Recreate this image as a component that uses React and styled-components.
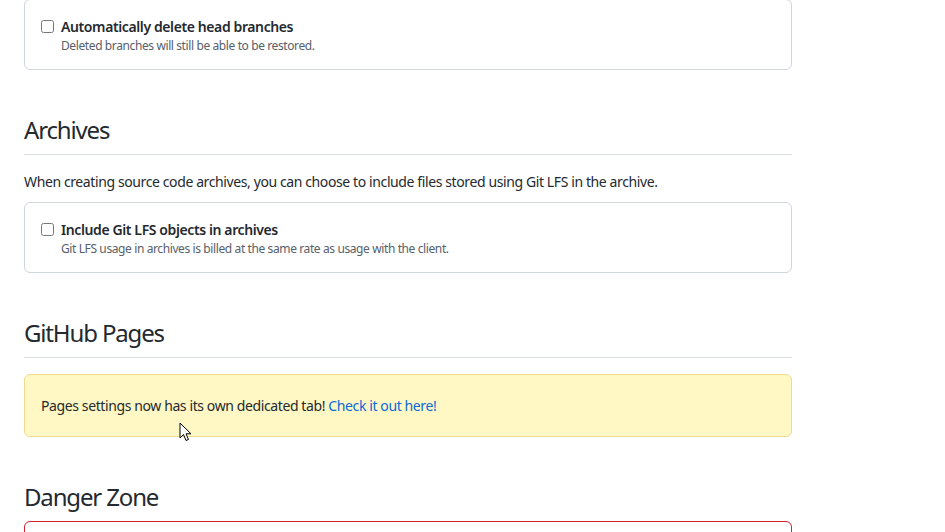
import React from "react";
import styled, { createGlobalStyle } from "styled-components";

const Global = createGlobalStyle`
  html, body { margin: 0; padding: 0; background: #ffffff; }
  body {
    font-family: "Noto Sans", "Liberation Sans", sans-serif;
    color: #24292f;
    font-size: 14px;
    letter-spacing: -0.028em;
  }
`;

const Page = styled.div`
  position: relative;
  width: 768px;
  padding-left: 24px;
  margin-top: -1px;
  padding-bottom: 40px;
`;

const Subhead = styled.div`
  margin-top: 42px;
  padding-bottom: 6px;
  border-bottom: ${(p) => (p.$plain ? "0" : "1px solid #d8dee4")};
  margin-bottom: ${(p) => (p.$plain ? "0" : "16px")};
`;

const Heading = styled.h2`
  margin: 0;
  font-size: 24px;
  font-weight: 400;
  line-height: 36px;
  letter-spacing: -0.048em;
  color: #24292f;
`;

const Lead = styled.p`
  margin: 0 0 10px;
  padding-top: 1px;
  font-size: 14px;
  line-height: 20px;
`;

const Box = styled.div`
  border: 1px solid ${(p) => (p.$danger ? "#cf222e" : "#d0d7de")};
  border-radius: 6px;
  padding: ${(p) => (p.$danger ? "16px" : "17px 16px 14px")};
  min-height: ${(p) => (p.$danger ? "40px" : "auto")};
`;

const Check = styled.label`
  display: grid;
  grid-template-columns: 13px 1fr;
  column-gap: 7px;
  align-items: start;
`;

const Input = styled.input`
  margin: 3px 0 0;
  width: 13px;
  height: 13px;
`;

const Label = styled.span`
  font-size: 14px;
  font-weight: 600;
  line-height: 20px;
`;

const Note = styled.span`
  grid-column: 2;
  font-size: 12px;
  line-height: 18px;
  color: #57606a;
`;

const Flash = styled.div`
  padding: 20px 16px;
  background: #fff8c5;
  border: 1px solid #eedb8f;
  border-radius: 6px;
  font-size: 14px;
  line-height: 21px;
`;

const Link = styled.a`
  color: #0969da;
  text-decoration: none;
`;

const Cursor = styled.svg`
  position: absolute;
  left: 179px;
  top: 423px;
  width: 14px;
  height: 21px;
`;

function CheckItem({ label, note }) {
  return (
    <Box>
      <Check>
        <Input type="checkbox" />
        <Label>{label}</Label>
        <Note>{note}</Note>
      </Check>
    </Box>
  );
}

export default function App() {
  return (
    <>
      <Global />
      <Page>
        <CheckItem
          label="Automatically delete head branches"
          note="Deleted branches will still be able to be restored."
        />

        <Subhead>
          <Heading>Archives</Heading>
        </Subhead>
        <Lead>
          When creating source code archives, you can choose to include files stored using Git LFS in the archive.
        </Lead>
        <CheckItem
          label="Include Git LFS objects in archives"
          note="Git LFS usage in archives is billed at the same rate as usage with the client."
        />

        <Subhead>
          <Heading>GitHub Pages</Heading>
        </Subhead>
        <Flash>
          Pages settings now has its own dedicated tab! <Link href="#">Check it out here!</Link>
        </Flash>

        <Subhead $plain>
          <Heading>Danger Zone</Heading>
        </Subhead>
        <Box $danger />

        <Cursor viewBox="0 0 14 21">
          <path d="M1 1 L1 16 L4.5 12.5 L7 18.5 L9.5 17.5 L7 11.8 L12 11.8 Z" fill="#ffffff" stroke="#000000" strokeWidth="1" strokeLinejoin="miter" />
        </Cursor>
      </Page>
    </>
  );
}
